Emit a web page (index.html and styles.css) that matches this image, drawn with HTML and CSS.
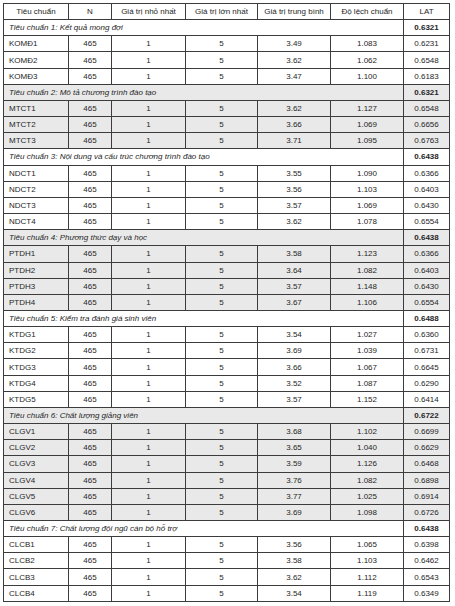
FILE: index.html
```html
<!DOCTYPE html>
<html lang="vi">
<head>
  <meta charset="UTF-8">
  <title>Độ tin cậy thang đo</title>
  <link rel="stylesheet" href="styles.css">
</head>
<body>
  <table class="stats">
    <colgroup>
      <col class="c-code">
      <col class="c-n">
      <col class="c-min">
      <col class="c-max">
      <col class="c-mean">
      <col class="c-sd">
      <col class="c-lat">
    </colgroup>
    <thead>
      <tr>
        <th>Tiêu chuẩn</th>
        <th>N</th>
        <th>Giá trị nhỏ nhất</th>
        <th>Giá trị lớn nhất</th>
        <th>Giá trị trung bình</th>
        <th>Độ lệch chuẩn</th>
        <th>LAT</th>
      </tr>
    </thead>

    <tbody>
      <tr class="group"><td colspan="6">Tiêu chuẩn 1: Kết quả mong đợi</td><td class="lat">0.6321</td></tr>
      <tr><td>KOMĐ1</td><td>465</td><td>1</td><td>5</td><td>3.49</td><td>1.083</td><td>0.6231</td></tr>
      <tr><td>KOMĐ2</td><td>465</td><td>1</td><td>5</td><td>3.62</td><td>1.062</td><td>0.6548</td></tr>
      <tr><td>KOMĐ3</td><td>465</td><td>1</td><td>5</td><td>3.47</td><td>1.100</td><td>0.6183</td></tr>
    </tbody>

    <tbody class="shaded">
      <tr class="group"><td colspan="6">Tiêu chuẩn 2: Mô tả chương trình đào tạo</td><td class="lat">0.6321</td></tr>
      <tr><td>MTCT1</td><td>465</td><td>1</td><td>5</td><td>3.62</td><td>1.127</td><td>0.6548</td></tr>
      <tr><td>MTCT2</td><td>465</td><td>1</td><td>5</td><td>3.66</td><td>1.069</td><td>0.6656</td></tr>
      <tr><td>MTCT3</td><td>465</td><td>1</td><td>5</td><td>3.71</td><td>1.095</td><td>0.6763</td></tr>
    </tbody>

    <tbody>
      <tr class="group"><td colspan="6">Tiêu chuẩn 3: Nội dung và cấu trúc chương trình đào tạo</td><td class="lat">0.6438</td></tr>
      <tr><td>NDCT1</td><td>465</td><td>1</td><td>5</td><td>3.55</td><td>1.090</td><td>0.6366</td></tr>
      <tr><td>NDCT2</td><td>465</td><td>1</td><td>5</td><td>3.56</td><td>1.103</td><td>0.6403</td></tr>
      <tr><td>NDCT3</td><td>465</td><td>1</td><td>5</td><td>3.57</td><td>1.069</td><td>0.6430</td></tr>
      <tr><td>NDCT4</td><td>465</td><td>1</td><td>5</td><td>3.62</td><td>1.078</td><td>0.6554</td></tr>
    </tbody>

    <tbody class="shaded">
      <tr class="group"><td colspan="6">Tiêu chuẩn 4: Phương thức dạy và học</td><td class="lat">0.6438</td></tr>
      <tr><td>PTDH1</td><td>465</td><td>1</td><td>5</td><td>3.58</td><td>1.123</td><td>0.6366</td></tr>
      <tr><td>PTDH2</td><td>465</td><td>1</td><td>5</td><td>3.64</td><td>1.082</td><td>0.6403</td></tr>
      <tr><td>PTDH3</td><td>465</td><td>1</td><td>5</td><td>3.57</td><td>1.148</td><td>0.6430</td></tr>
      <tr><td>PTDH4</td><td>465</td><td>1</td><td>5</td><td>3.67</td><td>1.106</td><td>0.6554</td></tr>
    </tbody>

    <tbody>
      <tr class="group"><td colspan="6">Tiêu chuẩn 5: Kiểm tra đánh giá sinh viên</td><td class="lat">0.6488</td></tr>
      <tr><td>KTDG1</td><td>465</td><td>1</td><td>5</td><td>3.54</td><td>1.027</td><td>0.6360</td></tr>
      <tr><td>KTDG2</td><td>465</td><td>1</td><td>5</td><td>3.69</td><td>1.039</td><td>0.6731</td></tr>
      <tr><td>KTDG3</td><td>465</td><td>1</td><td>5</td><td>3.66</td><td>1.067</td><td>0.6645</td></tr>
      <tr><td>KTDG4</td><td>465</td><td>1</td><td>5</td><td>3.52</td><td>1.087</td><td>0.6290</td></tr>
      <tr><td>KTDG5</td><td>465</td><td>1</td><td>5</td><td>3.57</td><td>1.152</td><td>0.6414</td></tr>
    </tbody>

    <tbody class="shaded">
      <tr class="group"><td colspan="6">Tiêu chuẩn 6: Chất lượng giảng viên</td><td class="lat">0.6722</td></tr>
      <tr><td>CLGV1</td><td>465</td><td>1</td><td>5</td><td>3.68</td><td>1.102</td><td>0.6699</td></tr>
      <tr><td>CLGV2</td><td>465</td><td>1</td><td>5</td><td>3.65</td><td>1.040</td><td>0.6629</td></tr>
      <tr><td>CLGV3</td><td>465</td><td>1</td><td>5</td><td>3.59</td><td>1.126</td><td>0.6468</td></tr>
      <tr><td>CLGV4</td><td>465</td><td>1</td><td>5</td><td>3.76</td><td>1.082</td><td>0.6898</td></tr>
      <tr><td>CLGV5</td><td>465</td><td>1</td><td>5</td><td>3.77</td><td>1.025</td><td>0.6914</td></tr>
      <tr><td>CLGV6</td><td>465</td><td>1</td><td>5</td><td>3.69</td><td>1.098</td><td>0.6726</td></tr>
    </tbody>

    <tbody>
      <tr class="group"><td colspan="6">Tiêu chuẩn 7: Chất lượng đội ngũ cán bộ hỗ trợ</td><td class="lat">0.6438</td></tr>
      <tr><td>CLCB1</td><td>465</td><td>1</td><td>5</td><td>3.56</td><td>1.065</td><td>0.6398</td></tr>
      <tr><td>CLCB2</td><td>465</td><td>1</td><td>5</td><td>3.58</td><td>1.103</td><td>0.6462</td></tr>
      <tr><td>CLCB3</td><td>465</td><td>1</td><td>5</td><td>3.62</td><td>1.112</td><td>0.6543</td></tr>
      <tr><td>CLCB4</td><td>465</td><td>1</td><td>5</td><td>3.54</td><td>1.119</td><td>0.6349</td></tr>
    </tbody>
  </table>
</body>
</html>
```

FILE: styles.css
```css
body {
  margin: 3px;
  background-color: #ffffff;
  font-family: 'Liberation Sans', Arial, sans-serif;
  color: #262626;
}

.stats {
  border-collapse: collapse;
  table-layout: fixed;
  width: 446px;
  font-size: 8px;
  box-shadow: 0 1px 0 #cfcfcf;
}

.c-code { width: 65px; }
.c-n    { width: 43px; }
.c-min  { width: 74px; }
.c-max  { width: 72px; }
.c-mean { width: 73px; }
.c-sd   { width: 73px; }
.c-lat  { width: 46px; }

.stats th,
.stats td {
  border: 1px solid #3c3c3c;
  height: 16.16px;
  padding: 0 5px;
  box-sizing: border-box;
  text-align: center;
  font-weight: normal;
  white-space: nowrap;
  overflow: hidden;
}

.stats td:first-child {
  text-align: left;
}

.group td:first-child {
  font-style: italic;
}

.group .lat {
  font-weight: bold;
}

.shaded td {
  background-color: #e9e9e9;
}
```
